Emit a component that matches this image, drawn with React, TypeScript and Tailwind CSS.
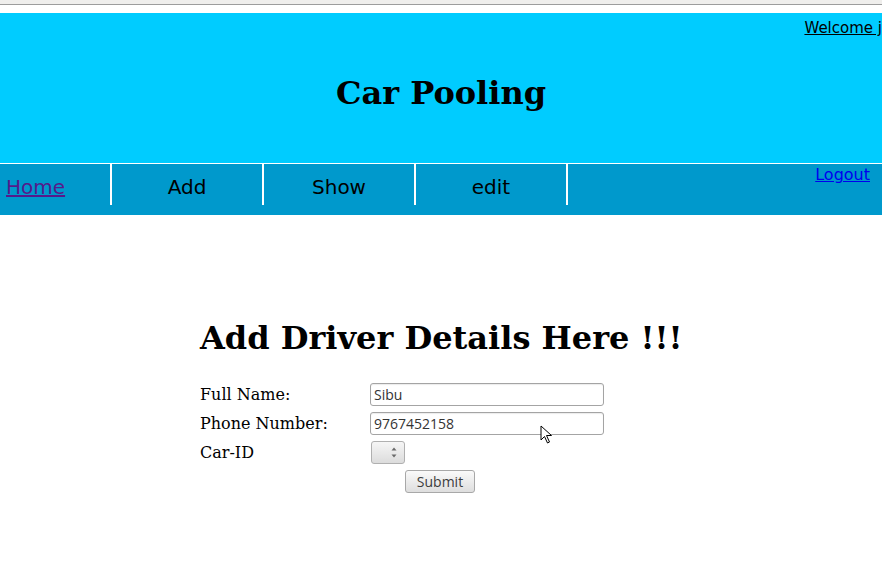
import React from "react";

export default function App() {
  return (
    <div className="w-[882px] h-[588px] overflow-hidden bg-white relative" style={{ fontFamily: '"DejaVu Serif", serif' }}>
      <div className="h-[4px] bg-[#efeeec]" />
      <div className="h-px bg-[#9c9c9c]" />
      <div className="h-[8px] bg-white" />
      <header className="h-[150px] bg-[#00ccff] relative flex flex-col">
        <div className="flex justify-end pt-[5px] whitespace-nowrap">
          <a className="underline text-black text-[15px] leading-[20px]" style={{ fontFamily: '"DejaVu Sans", sans-serif' }}>Welcome j</a>
        </div>
        <h1 className="text-center font-bold text-[32px] leading-[40px] mt-[35px]">Car Pooling</h1>
      </header>
      <div className="h-px bg-white" />
      <nav className="h-[51px] bg-[#0099cc] flex items-start" style={{ fontFamily: '"DejaVu Sans", sans-serif' }}>
        <div className="w-[110px] h-[41px] flex items-center pl-[6px] pt-[4px]">
          <a className="text-[#551a8b] underline text-[20px]">Home</a>
        </div>
        <div className="w-[2px] h-[41px] bg-white" />
        <div className="w-[150px] h-[41px] flex items-center justify-center text-[20px] text-black pt-[4px]">Add</div>
        <div className="w-[2px] h-[41px] bg-white" />
        <div className="w-[150px] h-[41px] flex items-center justify-center text-[20px] text-black pt-[4px]">Show</div>
        <div className="w-[2px] h-[41px] bg-white" />
        <div className="w-[150px] h-[41px] flex items-center justify-center text-[20px] text-black pt-[4px]">edit</div>
        <div className="w-[2px] h-[41px] bg-white" />
        <div className="flex-1 flex justify-end pr-[10px] pt-[1px]">
          <a className="text-[#0000ee] underline text-[16px] leading-[20px] mr-[2px]">Logout</a>
        </div>
      </nav>
      <main className="pl-[200px] pt-[103px]">
        <h2 className="font-bold text-[32px] leading-[40px]">Add Driver Details Here !!!</h2>
        <div className="mt-[25px] flex flex-col gap-[6px] text-[16px] text-black">
          <div className="flex items-center h-[23px]">
            <span className="w-[170px]">Full Name:</span>
            <input readOnly value="Sibu" className="w-[234px] h-[23px] border border-[#a4a4a4] rounded-[3px] px-[3px] text-[14px] text-[#333] bg-white shadow-[inset_0_1px_1px_rgba(0,0,0,0.08)]" style={{ fontFamily: '"Open Sans", "DejaVu Sans", sans-serif' }} />
          </div>
          <div className="flex items-center h-[23px]">
            <span className="w-[170px]">Phone Number:</span>
            <input readOnly value="9767452158" className="w-[234px] h-[23px] border border-[#a4a4a4] rounded-[3px] px-[3px] text-[14px] text-[#333] bg-white shadow-[inset_0_1px_1px_rgba(0,0,0,0.08)]" style={{ fontFamily: '"Open Sans", "DejaVu Sans", sans-serif' }} />
          </div>
          <div className="flex items-center h-[23px]">
            <span className="w-[171px]">Car-ID</span>
            <div className="w-[34px] h-[23px] border border-[#b0b0b0] rounded-[3px] bg-gradient-to-b from-[#f6f6f6] to-[#dcdcdc] flex items-center justify-end pr-[7px]">
              <svg width="6" height="13" viewBox="0 0 6 13">
                <path d="M3 1.5 L5.5 4.5 L0.5 4.5 Z" fill="#6a6a6a" />
                <path d="M3 11.5 L5.5 8.5 L0.5 8.5 Z" fill="#6a6a6a" />
              </svg>
            </div>
          </div>
          <div className="flex h-[23px] pl-[205px]">
            <button className="w-[70px] h-[23px] border border-[#a8a8a8] rounded-[3px] bg-gradient-to-b from-[#fafafa] to-[#dedede] text-[14px] text-[#3c3c3c] leading-none" style={{ fontFamily: '"Open Sans", "DejaVu Sans", sans-serif' }}>Submit</button>
          </div>
        </div>
      </main>
      <svg className="absolute left-[540px] top-[425px]" width="14" height="20" viewBox="0 0 14 20">
        <path d="M1 1 L1 15 L4.5 11.5 L7.5 18 L9.5 17 L6.5 10.5 L11.5 10.5 Z" fill="white" stroke="black" strokeWidth="1" strokeLinejoin="round" />
      </svg>
    </div>
  );
}
